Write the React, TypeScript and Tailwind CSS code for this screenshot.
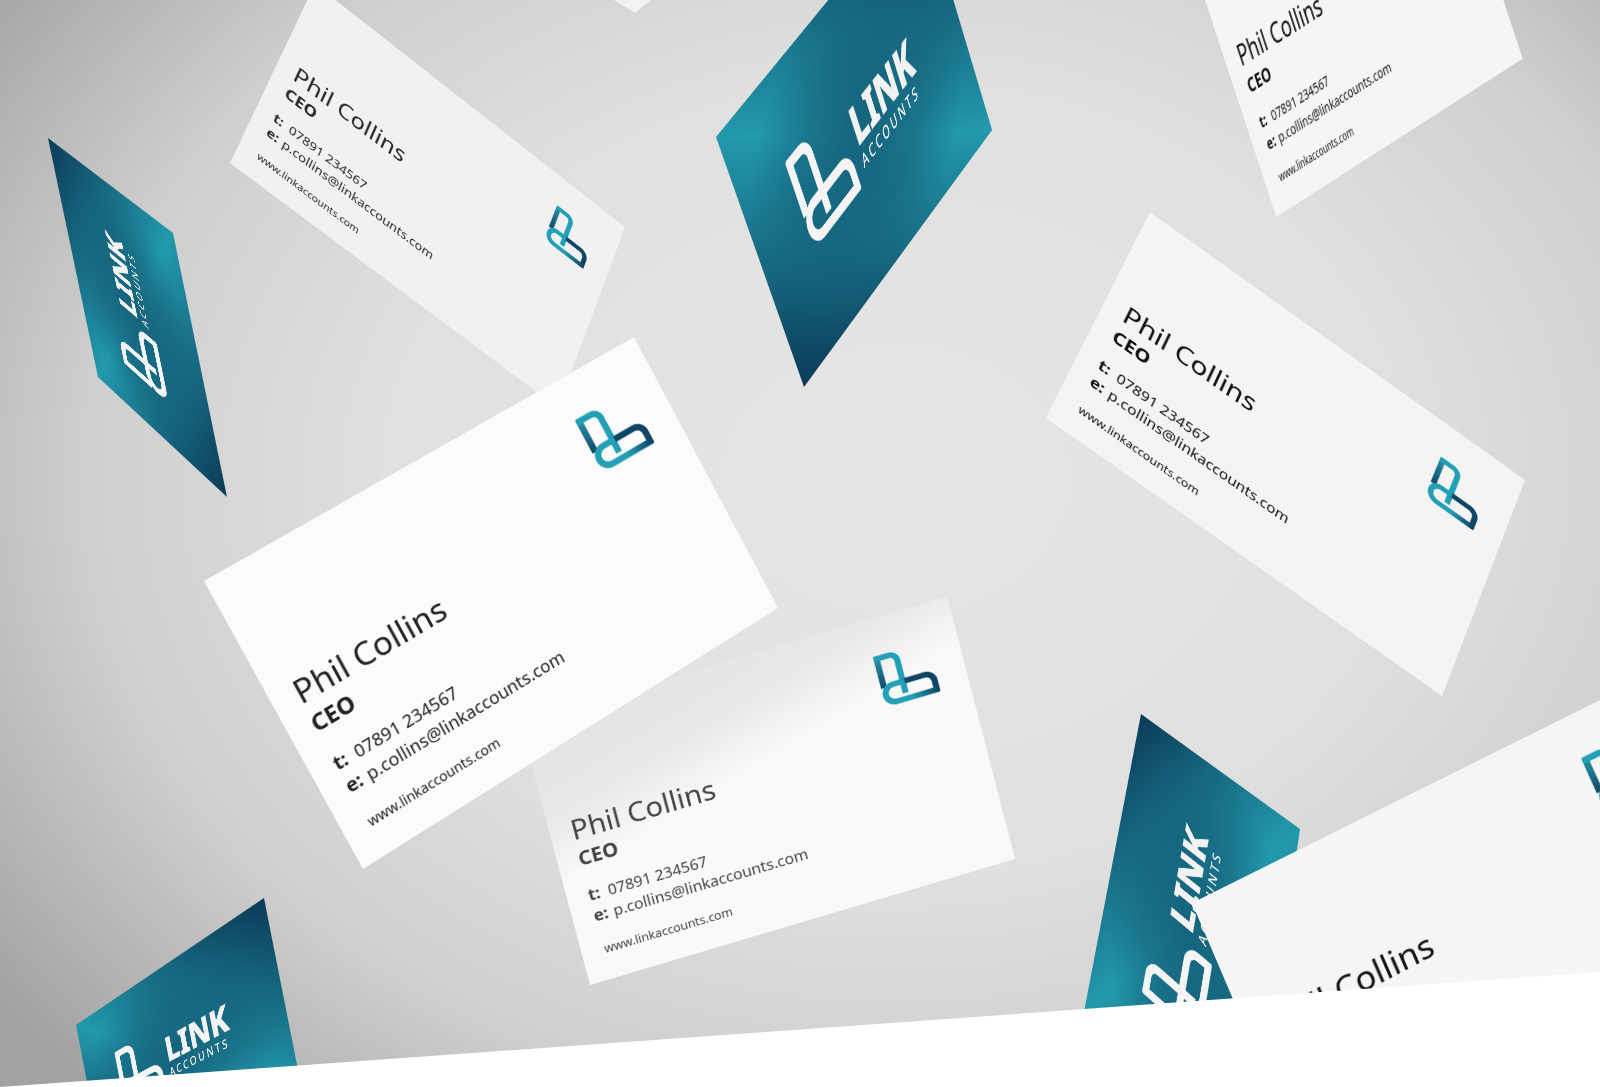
import React from 'react';

type Pt = [number, number];

const CARD_W = 500;
const CARD_H = 330;

// local card rect -> screen quad (TL, TR, BR, BL)
const quadTransform = (q: Pt[]) => {
  const [[x0, y0], [x1, y1], [x2, y2], [x3, y3]] = q;
  const sx = x0 - x1 + x2 - x3;
  const sy = y0 - y1 + y2 - y3;
  const dx1 = x1 - x2;
  const dx2 = x3 - x2;
  const dy1 = y1 - y2;
  const dy2 = y3 - y2;
  const den = dx1 * dy2 - dx2 * dy1;
  const g = (sx * dy2 - dx2 * sy) / den;
  const h = (dx1 * sy - sx * dy1) / den;
  const a = x1 - x0 + g * x1;
  const b = x3 - x0 + h * x3;
  const d = y1 - y0 + g * y1;
  const e = y3 - y0 + h * y3;
  const m = [a / CARD_W, d / CARD_W, 0, g / CARD_W, b / CARD_H, e / CARD_H, 0, h / CARD_H, 0, 0, 1, 0, x0, y0, 0, 1];
  return `matrix3d(${m.join(',')})`;
};

const LogoMark: React.FC<{ mono?: boolean; className?: string }> = ({ mono = false, className }) => (
  <svg viewBox="0 0 64 64" fill="none" strokeWidth={6.5} className={className}>
    <defs>
      <linearGradient id="leftBar" gradientUnits="userSpaceOnUse" x1="6" y1="4" x2="6" y2="42">
        <stop offset="0" stopColor="#2a93a8" />
        <stop offset="1" stopColor="#0e4564" />
      </linearGradient>
      <linearGradient id="bottomBar" gradientUnits="userSpaceOnUse" x1="60" y1="58" x2="20" y2="58">
        <stop offset="0" stopColor="#0e4564" />
        <stop offset="0.7" stopColor="#23a0b5" />
      </linearGradient>
    </defs>
    <path d="M5 3 V40" stroke={mono ? '#f4f4f4' : 'url(#leftBar)'} />
    <path d="M2.5 5.5 H18 a8 8 0 0 1 8 8 V52" stroke={mono ? '#f4f4f4' : '#22a0b5'} />
    <path d="M26 38.5 H50 a9 9 0 0 1 9 9 V61" stroke={mono ? '#f4f4f4' : '#0e4564'} />
    <path d="M61.5 58.5 H15 a10 10 0 0 1 0 -20 H28" stroke={mono ? '#f4f4f4' : 'url(#bottomBar)'} />
  </svg>
);

const CardFace: React.FC<{ quad: Pt[]; face: string; ink: string; shadow?: boolean }> = ({ quad, face, ink, shadow }) => (
  <div
    className={`absolute left-0 top-0 h-[330px] w-[500px] origin-top-left overflow-hidden ${face} ${ink} [font-family:'Noto_Sans',sans-serif]`}
    style={{ transform: quadTransform(quad) }}
  >
    {shadow && (
      <div className="absolute inset-0 bg-[linear-gradient(164deg,rgba(0,0,0,0.09)_0%,rgba(0,0,0,0.07)_26%,rgba(0,0,0,0)_43%)]" />
    )}
    <div className="absolute left-6 top-[127px] flex flex-col">
      <div className="text-[33px] leading-[33px]">Phil Collins</div>
      <div className="mt-[5px] text-[23px] font-bold leading-[28px]">CEO</div>
      <div className="mt-[19px] flex text-[17.7px] leading-[26px]">
        <span className="w-[23px] text-[19px] font-bold">t:</span>
        <span>07891 234567</span>
      </div>
      <div className="flex text-[17.7px] leading-[26px]">
        <span className="w-[23px] text-[19px] font-bold">e:</span>
        <span>p.collins@linkaccounts.com</span>
      </div>
      <div className="ml-[2px] mt-[19px] text-[14px] leading-[20px]">www.linkaccounts.com</div>
    </div>
    <LogoMark className="absolute left-[400px] top-[43px] h-[68px] w-[68px]" />
  </div>
);

const CardBack: React.FC<{ quad: Pt[] }> = ({ quad }) => (
  <div
    className="absolute left-0 top-0 h-[330px] w-[500px] origin-top-left overflow-hidden bg-[radial-gradient(ellipse_at_center,rgba(20,92,118,0.9)_0%,rgba(20,92,118,0.55)_40%,rgba(20,92,118,0)_72%),linear-gradient(to_top_right,#0b3a57_0%,#2299ac_50%,#0b3a57_100%)]"
    style={{ transform: quadTransform(quad) }}
  >
    <LogoMark mono className="absolute left-[94px] top-[95px] h-[125px] w-[125px]" />
    <div className="absolute left-[232px] top-[116px] flex flex-col text-[#f2f2f2] [font-family:'Noto_Sans',sans-serif]">
      <div className="text-[62px] font-extrabold leading-[64px] [-webkit-text-stroke:1px_#f2f2f2]">LINK</div>
      <div className="text-[21px] font-medium leading-[24px] tracking-[4.5px]">ACCOUNTS</div>
    </div>
  </div>
);

export default function App() {
  return (
    <div className="relative h-[1087px] w-[1600px] overflow-hidden bg-[radial-gradient(ellipse_70%_80%_at_56%_44%,#e6e6e6_0%,#e0e0e0_45%,#cfcfcf_72%,#a2a2a2_100%)]">
      <div className="absolute left-[614px] top-0 h-[13px] w-[37px] bg-[#f2f2f2] [clip-path:polygon(0_0,100%_0,57%_100%)]" />

      <CardBack quad={[[98, 377], [48, 138], [173, 233], [227, 497]]} />
      <CardBack quad={[[716, 137], [920, -112], [992, 130], [804, 387]]} />
      <CardBack quad={[[76, 1025], [264, 898], [303, 1095], [105, 1175]]} />
      <CardBack quad={[[1084, 1012], [1141, 714], [1300, 829], [1250, 1170]]} />

      <CardFace quad={[[315, -16], [625, 227], [558, 408], [230, 163]]} face="bg-[#f1f1f1]" ink="text-[#2a2a2a]" />
      <CardFace quad={[[1188, -52], [1434, -210], [1522, 58], [1276, 216]]} face="bg-[#f5f5f5]" ink="text-[#111]" />
      <CardFace quad={[[1150, 212], [1525, 480], [1442, 696], [1046, 418]]} face="bg-[#f4f4f4]" ink="text-[#111]" />
      <CardFace quad={[[520, 722], [947, 596], [1015, 859], [590, 985]]} face="bg-[#f9f9f9]" ink="text-[#444]" shadow />
      <CardFace quad={[[204, 581], [634, 337], [778, 608], [363, 869]]} face="bg-[#fbfbfb]" ink="text-[#222]" />
      <CardFace quad={[[1192, 903], [1648, 676], [1780, 965], [1325, 1215]]} face="bg-[#f5f5f5]" ink="text-[#111]" />

      {/* white wedge along the bottom of the page */}
      <div className="absolute bottom-0 left-0 h-[115px] w-full bg-white [clip-path:polygon(0_100%,100%_0,100%_100%)]" />
    </div>
  );
}
